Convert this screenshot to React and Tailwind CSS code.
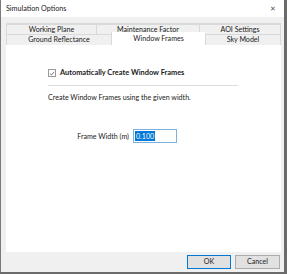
const font = { fontFamily: 'Lato, "Liberation Sans", sans-serif' };

const Tab = ({ label }) => (
  <div className="flex items-center justify-center border-l border-t border-[#d9d9d9] first:border-l-0 text-[#1a1a1a] whitespace-nowrap">
    {label}
  </div>
);

export default function App() {
  return (
    <div className="w-[287px] h-[274px] bg-[#6b6b6b] overflow-hidden text-[7.1px] leading-none" style={font}>
      <div className="w-[284px] h-[272px] flex flex-col border-l border-[#7a7a7a] bg-[#f0f0f0]">
        {/* title bar */}
        <div className="h-[17px] bg-white flex items-center justify-between pl-[5px] pr-[8px] text-[#222] text-[7.2px]">
          <span>Simulation Options</span>
          <span className="text-[7px] text-[#555]">✕</span>
        </div>

        <div className="flex-1 flex flex-col pl-[5px] pr-[3px] pt-[6px]">
          {/* tab rows */}
          <div className="flex flex-col border border-b-0 border-[#d9d9d9]">
            <div className="grid grid-cols-[89px_103px_1fr] h-[10px]">
              <Tab label="Working Plane" />
              <Tab label="Maintenance Factor" />
              <Tab label="AOI Settings" />
            </div>
            <div className="grid grid-cols-[104px_94px_1fr] h-[11px]">
              <Tab label="Ground Reflectance" />
              <div className="border-l border-[#d9d9d9] -mt-[2px] h-[13px] bg-white flex items-center justify-center text-[#1a1a1a]">
                Window Frames
              </div>
              <Tab label="Sky Model" />
            </div>
          </div>

          {/* page */}
          <div className="h-[207px] bg-white flex flex-col pl-[42px]">
            <div className="flex items-center mt-[24px] gap-[4px]">
              <div className="w-[8px] h-[8px] border border-[#9a9a9a] flex items-center justify-center">
                <svg width="7" height="7" viewBox="0 0 7 7">
                  <path d="M1 3.6 L2.8 5.3 L6 1.5" stroke="#555" strokeWidth="0.9" fill="none" />
                </svg>
              </div>
              <span className="font-bold text-[7.4px] text-[#1a1a1a]">Automatically Create Window Frames</span>
            </div>
            <div className="w-[190px] h-px bg-[#dcdcdc] mt-[8px]" />
            <div className="mt-[8px] text-[#222]">Create Window Frames using the given width.</div>
            <div className="flex items-center mt-[28px] gap-[4px]">
              <span className="text-[#222] w-[81px] text-right whitespace-nowrap">Frame Width (m)</span>
              <div className="w-[44px] h-[14px] border border-[#7fb0dc] flex items-center pl-[1px]">
                <span className="bg-[#0078d7] text-white px-[1px] py-[1.5px]">0.100</span>
              </div>
            </div>
          </div>

          {/* footer */}
          <div className="flex-1 flex justify-end items-start pt-[3px] gap-[4px] pr-[1px]">
            <button className="w-[44px] h-[14px] border border-[#0078d7] bg-[#e1e1e1] text-[#222] flex items-center justify-center">OK</button>
            <button className="w-[45px] h-[14px] border border-[#adadad] bg-[#e1e1e1] text-[#222] flex items-center justify-center">Cancel</button>
          </div>
        </div>
      </div>
    </div>
  );
}
